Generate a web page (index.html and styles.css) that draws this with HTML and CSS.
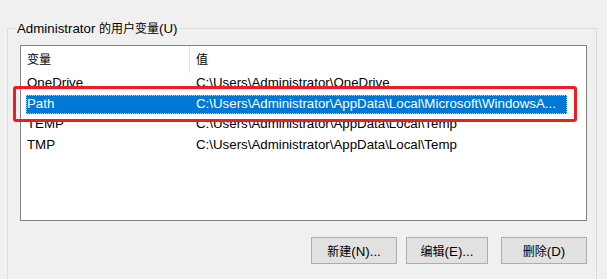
FILE: index.html
```html
<!DOCTYPE html>
<html>
<head>
<meta charset="utf-8">
<link rel="stylesheet" href="styles.css">
</head>
<body>
<div class="group">
  <div class="group-label">Administrator <span class="cjk">的用户变量</span>(U)</div>
  <div class="list">
    <div class="row header">
      <div class="c1"><span class="cjk">变量</span></div>
      <div class="c2"><span class="cjk">值</span></div>
    </div>
    <div class="row"><div class="c1">OneDrive</div><div class="c2">C:\Users\Administrator\OneDrive</div></div>
    <div class="row sel"><div class="selbox"><div class="c1">Path</div><div class="c2">C:\Users\Administrator\AppData\Local\Microsoft\WindowsA...</div></div></div>
    <div class="row"><div class="c1">TEMP</div><div class="c2">C:\Users\Administrator\AppData\Local\Temp</div></div>
    <div class="row"><div class="c1">TMP</div><div class="c2">C:\Users\Administrator\AppData\Local\Temp</div></div>
    <div class="highlight"></div>
  </div>
  <div class="buttons">
    <div class="btn b1"><span class="cjk">新建</span>(N)...</div>
    <div class="btn b2"><span class="cjk">编辑</span>(E)...</div>
    <div class="btn b3"><span class="cjk">删除</span>(D)</div>
  </div>
</div>
</body>
</html>
```

FILE: styles.css
```css
html, body {
  margin: 0;
  padding: 0;
  background: #f0f0f0;
  width: 607px;
  height: 279px;
  overflow: hidden;
  font-family: "Liberation Sans", "Noto Sans CJK SC", sans-serif;
  font-size: 13.3px;
  color: #000;
}
.cjk {
  font-family: "Noto Sans CJK SC", sans-serif;
  font-size: 12px;
}
.group {
  margin: 28px 0 0 7px;
  width: 590px;
  height: 251px;
  border: 1px solid #dcdcdc;
  border-bottom: none;
  box-sizing: border-box;
  position: relative;
}
.group-label {
  display: inline-block;
  margin: -9px 0 0 8px;
  padding: 0 1px;
  background: #f0f0f0;
  line-height: 16px;
  height: 16px;
  vertical-align: top;
}
.list {
  position: relative;
  margin: 1px 0 0 12px;
  width: 567px;
  height: 176px;
  border: 1px solid #828282;
  box-sizing: border-box;
  background: #fff;
}
.row {
  display: flex;
  height: 20.5px;
  line-height: 20px;
  white-space: nowrap;
}
.row.header {
  height: 27px;
  line-height: 26px;
}
.row .c1 {
  width: 162px;
  padding-left: 6px;
  flex: none;
}
.row .c2 {
  padding-left: 7px;
  flex: none;
}
.header .c1 {
  border-right: 1px solid #e5e5e5;
  width: 162px;
}
.header .c2 {
  padding-left: 6px;
}
.row.sel {
  padding-left: 5px;
}
.selbox {
  display: flex;
  background: #0078d7;
  color: #fff;
  width: 541px;
  height: 19px;
  line-height: 18px;
  margin-top: 1px;
  outline: 1px dotted #9ec9ee;
  outline-offset: -1px;
}
.selbox .c1 {
  width: 162px;
  padding-left: 1px;
}
.highlight {
  position: absolute;
  left: -8px;
  top: 40px;
  width: 564px;
  height: 36px;
  border: 3.5px solid #ee1c25;
  border-radius: 3px;
  box-sizing: border-box;
}
.buttons {
  display: flex;
  margin: 16px 0 0 303px;
}
.btn {
  height: 27px;
  line-height: 25px;
  text-align: center;
  background: #e1e1e1;
  border: 1px solid #adadad;
  box-sizing: border-box;
  color: #000;
}
.b1 { width: 86px; }
.b2 { width: 82px; margin-left: 9px; }
.b3 { width: 86px; margin-left: 13px; }
```
